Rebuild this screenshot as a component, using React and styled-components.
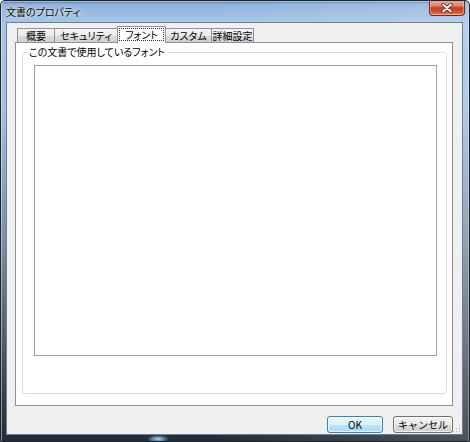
import React from "react";
import styled, { createGlobalStyle } from "styled-components";

const GlobalStyle = createGlobalStyle`
  html, body {
    margin: 0;
    padding: 0;
    background: #ffffff;
  }
  body {
    font-family: "Noto Sans CJK JP", "Noto Sans", sans-serif;
    font-size: 10px;
    font-feature-settings: "palt";
  }
`;

const Window = styled.div`
  width: 470px;
  height: 442px;
  box-sizing: border-box;
  display: flex;
  flex-direction: column;
  border: 1px solid #1b2530;
  border-radius: 5px 5px 0 0;
  box-shadow: inset 1px 1px 0 rgba(255, 255, 255, 0.45),
    inset -1px 0 0 rgba(255, 255, 255, 0.3);
  background: radial-gradient(ellipse 11px 4px at 157px 438px, #a8dcff, rgba(120, 180, 230, 0) 100%),
    linear-gradient(to right, rgba(255, 255, 255, 0) 45%, rgba(255, 255, 255, 0.18) 100%),
    linear-gradient(
      to bottom,
      #4f73a3 0,
      #8fb1da 3px,
      #a7c5e7 21px,
      #a3bedc 110px,
      #7a8ea3 240px,
      #3a4857 380px,
      #222c37 441px
    );
  overflow: hidden;
`;

const TitleBar = styled.div`
  height: 21px;
  display: flex;
  align-items: flex-start;
  padding-left: 5px;
`;

const Title = styled.div`
  margin-top: 4px;
  font-size: 10px;
  line-height: 13px;
  color: #000;
  text-shadow: 0 0 5px rgba(255, 255, 255, 0.9), 0 0 2px rgba(255, 255, 255, 0.8);
`;

const CloseButton = styled.div`
  margin-left: auto;
  margin-right: 4px;
  margin-top: -1px;
  width: 36px;
  height: 16px;
  box-sizing: border-box;
  border: 1px solid #6b2b22;
  border-top: none;
  border-radius: 0 0 4px 4px;
  background: linear-gradient(
    to bottom,
    #e9b1a3 0%,
    #dc826d 40%,
    #c73b22 52%,
    #cf5435 80%,
    #e08a68 100%
  );
  box-shadow: inset 0 0 0 1px rgba(255, 220, 210, 0.45);
  display: flex;
  align-items: center;
  justify-content: center;
`;

const Client = styled.div`
  flex: 1;
  margin: 0 6px 6px 5px;
  border: 1px solid #6e7f92;
  background: #f0f0f0;
  display: flex;
  flex-direction: column;
  padding: 3px 9px 1px 8px;
  position: relative;
`;

const TabStrip = styled.div`
  display: flex;
  align-items: flex-end;
  height: 17px;
  padding-left: 2px;
  margin-bottom: -1px;
  position: relative;
  z-index: 1;
`;

const Tab = styled.div`
  box-sizing: border-box;
  width: ${(p) => p.$w}px;
  height: ${(p) => (p.$active ? 17 : 15)}px;
  border: 1px solid #8e9199;
  border-bottom: ${(p) => (p.$active ? "none" : "1px solid #8e9199")};
  margin-left: ${(p) => (p.$first ? 0 : -1)}px;
  background: ${(p) =>
    p.$active ? "#ffffff" : "linear-gradient(to bottom, #f4f4f4 0%, #ebebeb 50%, #dddddd 51%, #cfcfcf 100%)"};
  display: flex;
  align-items: center;
  justify-content: center;
  padding: ${(p) => (p.$active ? "1px 1px 2px" : "0")};
  font-size: 10px;
  line-height: 13px;
  color: #000;
  white-space: nowrap;
`;

const FocusRect = styled.span`
  flex: 1;
  align-self: stretch;
  display: flex;
  align-items: center;
  justify-content: center;
  border: 1px dotted #333;
`;

const TabPanel = styled.div`
  flex: 1;
  background: #ffffff;
  border: 1px solid #8e9199;
  display: flex;
  flex-direction: column;
  padding: 3px 5px 11px 6px;
`;

const GroupBox = styled.fieldset`
  flex: 1;
  margin: 0;
  min-width: 0;
  border: 1px solid #d5dfe5;
  border-radius: 3px;
  padding: 7px 9px 37px 11px;
  display: flex;
  flex-direction: column;
`;

const GroupLabel = styled.legend`
  margin-left: -7px;
  padding: 0 2px;
  font-size: 10px;
  line-height: 12px;
  color: #000;
`;

const ListBox = styled.div`
  flex: 1;
  background: #ffffff;
  border: 1px solid #9b9fa6;
`;

const Footer = styled.div`
  display: flex;
  justify-content: flex-end;
  gap: 10px;
  margin-top: 10px;
`;

const Button = styled.button`
  box-sizing: border-box;
  width: ${(p) => p.$w}px;
  height: 17px;
  padding: 0;
  border-radius: 3px;
  font-family: inherit;
  font-size: 10px;
  line-height: 12px;
  color: #000;
  border: 1px solid ${(p) => (p.$default ? "#3c7fb1" : "#707070")};
  background: ${(p) =>
    p.$default
      ? "linear-gradient(to bottom, #eaf6fd 0%, #d9f0fc 50%, #bee6fd 51%, #a7d9f5 100%)"
      : "linear-gradient(to bottom, #f2f2f2 0%, #ebebeb 50%, #dddddd 51%, #cfcfcf 100%)"};
  box-shadow: inset 0 0 0 1px rgba(255, 255, 255, 0.7);
`;

const Grip = styled.svg`
  position: absolute;
  right: 1px;
  bottom: 1px;
`;

const tabs = [
  { label: "概要", w: 38 },
  { label: "セキュリティ", w: 64 },
  { label: "フォント", w: 49, active: true },
  { label: "カスタム", w: 47 },
  { label: "詳細設定", w: 43 },
];

const App = () => {
  return (
    <>
      <GlobalStyle />
      <Window>
        <TitleBar>
          <Title>文書のプロパティ</Title>
          <CloseButton>
            <svg width="12" height="10" viewBox="0 0 12 10">
              <path
                d="M2 1.5 L10 8.5 M10 1.5 L2 8.5"
                stroke="#5a2018"
                strokeWidth="3.4"
                strokeLinecap="round"
              />
              <path
                d="M2 1.5 L10 8.5 M10 1.5 L2 8.5"
                stroke="#ffffff"
                strokeWidth="1.8"
                strokeLinecap="round"
              />
            </svg>
          </CloseButton>
        </TitleBar>
        <Client>
          <TabStrip>
            {tabs.map((t, i) => (
              <Tab key={t.label} $w={t.w} $active={t.active} $first={i === 0}>
                {t.active ? <FocusRect>{t.label}</FocusRect> : t.label}
              </Tab>
            ))}
          </TabStrip>
          <TabPanel>
            <GroupBox>
              <GroupLabel>この文書で使用しているフォント</GroupLabel>
              <ListBox />
            </GroupBox>
          </TabPanel>
          <Footer>
            <Button $w={56} $default>
              OK
            </Button>
            <Button $w={60}>キャンセル</Button>
          </Footer>
          <Grip width="8" height="8" viewBox="0 0 8 8">
            <rect x="6" y="0" width="1" height="1" fill="#b5b5b5" />
            <rect x="3" y="3" width="1" height="1" fill="#b5b5b5" />
            <rect x="6" y="3" width="1" height="1" fill="#b5b5b5" />
            <rect x="0" y="6" width="1" height="1" fill="#b5b5b5" />
            <rect x="3" y="6" width="1" height="1" fill="#b5b5b5" />
            <rect x="6" y="6" width="1" height="1" fill="#b5b5b5" />
          </Grip>
        </Client>
      </Window>
    </>
  );
};

export default App;
